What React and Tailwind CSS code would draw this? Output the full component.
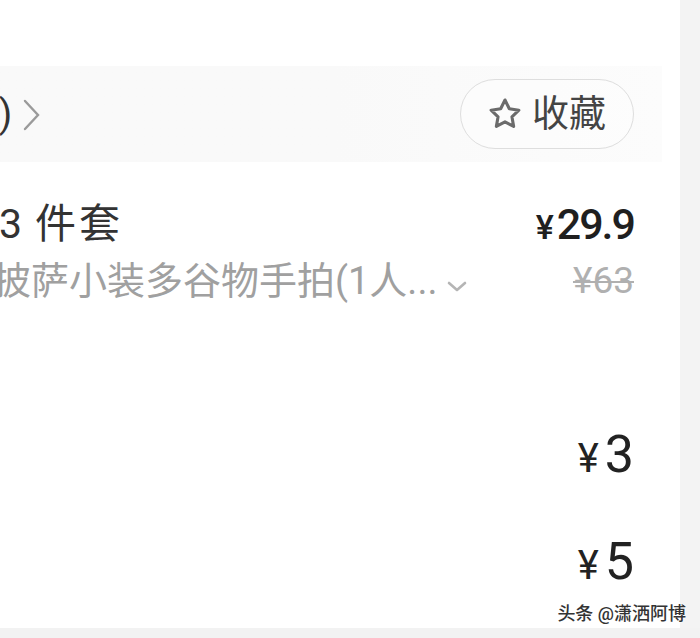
import React from "react";

const F = { fontFamily: 'Roboto, "Noto Sans CJK SC", "Noto Sans", sans-serif' };

function Star() {
  return (
    <svg width="38" height="37" viewBox="0 0 24 24" fill="none" stroke="#6b6b6b" strokeWidth="2" strokeLinejoin="round" strokeLinecap="round">
      <path d="M12 2.6l2.8 5.7 6.2.9-4.5 4.3 1.1 6.2L12 16.8l-5.6 2.9 1.1-6.2L3 9.2l6.2-.9z" />
    </svg>
  );
}

export default function App() {
  return (
    <div className="w-[700px] h-[638px] bg-[#f2f2f2] flex flex-col overflow-hidden relative" style={F}>
      <div className="flex h-[628px]">
        <div className="w-[680px] h-full bg-white flex flex-col">
          <div className="h-[66px]" />
          <div className="h-[96px] w-[662px] bg-gradient-to-r from-[#f9f9f9] via-[#f9f9f9] to-[#fcfcfc] flex items-center justify-between pr-[28px]">
            <div className="flex items-center -ml-[1px]">
              <span className="text-[38px] leading-none text-[#333]">)</span>
              <svg width="22" height="34" viewBox="0 0 22 34" fill="none" stroke="#9a9a9a" strokeWidth="2.4" strokeLinecap="round" className="ml-[9px] mt-[2px]">
                <path d="M4 3l13 14L4 31" />
              </svg>
            </div>
            <div className="h-[70px] w-[174px] rounded-full border-[1.5px] border-[#dedede] bg-white/40 flex items-center justify-center gap-[8px] pr-[2px]">
              <Star />
              <span className="text-[37px] leading-none text-[#444]">收藏</span>
            </div>
          </div>
          <div className="flex justify-between items-start pr-[46px] mt-[36px]">
            <div className="flex flex-col">
              <span className="text-[41px] leading-[52px] text-[#333] -ml-[1px] flex">
                <span>3</span>
                <span className="ml-[13px] tracking-[3px]">件套</span>
              </span>
              <span className="text-[38px] leading-[48px] text-[#a0a0a0] mt-[7px] -ml-[7px] flex items-center">
                披萨小装多谷物手拍(1人...
                <svg width="24" height="14" viewBox="0 0 24 14" fill="none" stroke="#b5b5b5" strokeWidth="2.6" strokeLinecap="round" strokeLinejoin="round" className="ml-[8px] mt-[10px]">
                  <path d="M4 4l8 7 8-7" />
                </svg>
              </span>
            </div>
            <div className="flex flex-col items-end">
              <span className="leading-[52px] text-[#1f1f1f] flex items-baseline">
                <span className="text-[34px] font-medium mr-[3px]">¥</span>
                <span className="text-[43px] font-medium tracking-[-2px]">29.9</span>
              </span>
              <span className="text-[37px] leading-[48px] text-[#b0b0b0] line-through decoration-[2px] mt-[4px]">¥63</span>
            </div>
          </div>
          <div className="flex justify-end pr-[46px] mt-[120px]">
            <span className="flex items-baseline text-[#222] leading-[60px]">
              <span className="text-[40px] mr-[6px]">¥</span>
              <span className="text-[52px]">3</span>
            </span>
          </div>
          <div className="flex justify-end pr-[46px] mt-[43px]">
            <span className="flex items-baseline text-[#222] leading-[60px]">
              <span className="text-[40px] mr-[6px]">¥</span>
              <span className="text-[52px]">5</span>
            </span>
          </div>
        </div>
        <div className="flex-1 bg-[#f3f3f3]" />
      </div>
      <div className="absolute right-[14px] bottom-[15px] text-[18px] leading-none text-[#333] font-medium" style={{ textShadow: "0 0 2px #fff, 0 0 2px #fff" }}>
        头条 @潇洒阿博
      </div>
    </div>
  );
}
